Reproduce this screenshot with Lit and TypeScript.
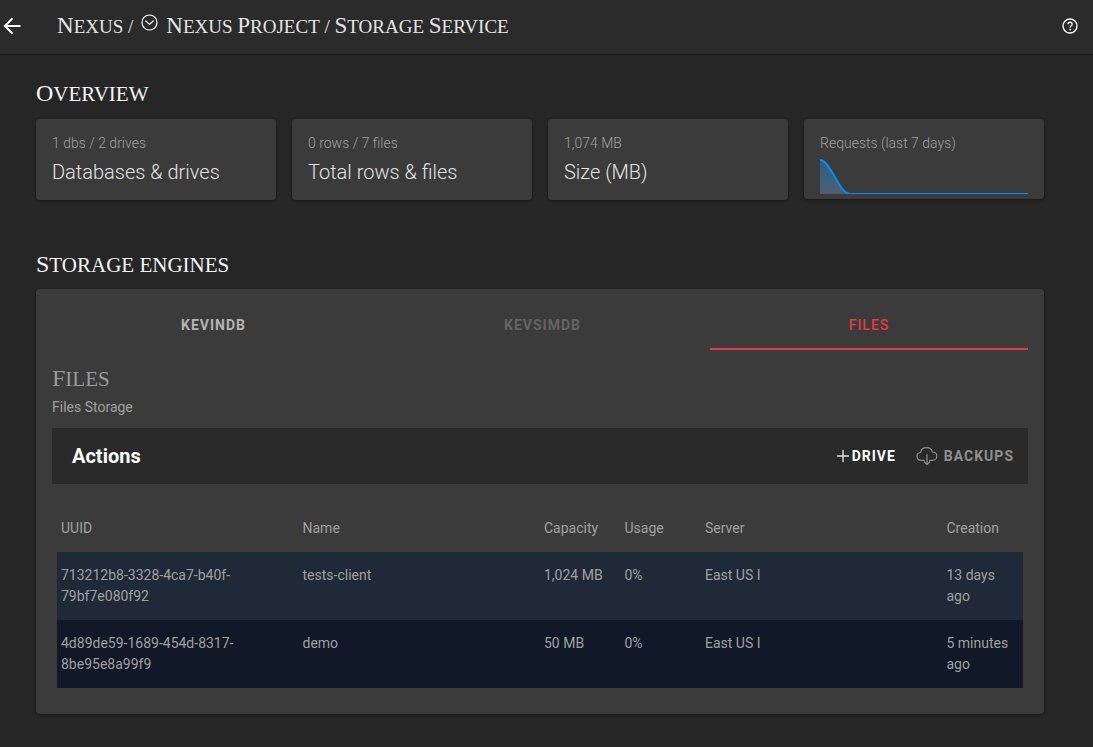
import { LitElement, html, css, svg } from "lit";
import { customElement, property, state } from "lit/decorators.js";
import { classMap } from "lit/directives/class-map.js";

interface Drive {
  uuid: string;
  name: string;
  capacity: string;
  usage: string;
  server: string;
  creation: string;
}

const drives: Drive[] = [
  {
    uuid: "713212b8-3328-4ca7-b40f-79bf7e080f92",
    name: "tests-client",
    capacity: "1,024 MB",
    usage: "0%",
    server: "East US I",
    creation: "13 days ago",
  },
  {
    uuid: "4d89de59-1689-454d-8317-8be95e8a99f9",
    name: "demo",
    capacity: "50 MB",
    usage: "0%",
    server: "East US I",
    creation: "5 minutes ago",
  },
];

/* Titling text: large initials on capitalised words, small capitals elsewhere. */
const titlingStyles = css`
  .word {
    display: inline-block;
    text-transform: uppercase;
  }
  .title .initial::first-letter {
    font-size: 24px;
  }
  .crumbs .initial::first-letter {
    font-size: 23px;
  }
`;

const titling = (text: string) =>
  text
    .split(" ")
    .map(
      (word, i) =>
        html`${i ? " " : ""}<span class=${classMap({ word: true, initial: /^[A-Z]/.test(word) })}>${word}</span>`
    );

const reset = css`
  *,
  *::before,
  *::after {
    box-sizing: border-box;
  }
  h1,
  h2,
  h3,
  p {
    margin: 0;
    font-weight: 400;
  }
  svg {
    display: block;
    flex: none;
  }
  a {
    color: inherit;
    text-decoration: none;
  }
  button {
    font: inherit;
    color: inherit;
    background: none;
    border: 0;
    padding: 0;
    cursor: pointer;
  }
`;

@customElement("app-header")
export class AppHeader extends LitElement {
  static styles = [
    reset,
    titlingStyles,
    css`
      :host {
        display: flex;
        align-items: center;
        box-sizing: border-box;
        height: 54px;
        padding: 0 15px 2px 0;
        background: #2b2b2b;
        box-shadow: 0 1px 1px #202020;
      }
      .crumbs {
        display: flex;
        align-items: center;
        gap: 8px;
        flex: 1;
        margin-left: 33px;
        font-family: "Liberation Serif", serif;
        font-size: 19px;
        line-height: 24px;
        color: #e4e4e4;
        white-space: nowrap;
      }
      .switch {
        margin-bottom: 7px;
      }
    `,
  ];

  render() {
    return html`
      <button aria-label="Back">
        <svg width="24" height="24" viewBox="0 0 24 24" fill="#fff">
          <path d="M20.5 10.9H7.4l5.8-5.8-1.5-1.4L3.4 12l8.3 8.3 1.5-1.4-5.8-5.8h13.1z" />
        </svg>
      </button>
      <nav class="crumbs" aria-label="Breadcrumb">
        <span><a href="#">${titling("Nexus")}</a> /</span>
        <button class="switch" aria-label="Switch project">
          <svg width="17" height="17" viewBox="0 0 17 17" fill="none" stroke="#fff" stroke-width="1.2">
            <circle cx="8.5" cy="8.5" r="7.5" />
            <path d="M4.8 7l3.7 3.4L12.2 7" stroke-linecap="round" stroke-linejoin="round" />
          </svg>
        </button>
        <span><a href="#">${titling("Nexus Project")}</a> / ${titling("Storage Service")}</span>
      </nav>
      <button aria-label="Help">
        <svg width="16" height="16" viewBox="0 0 16 16" fill="none" stroke="#fff" stroke-width="1.3">
          <circle cx="8" cy="8" r="7" />
          <path d="M5.9 6.3C5.9 3.5 10.2 3.6 10.2 6.2 10.2 7.7 8.1 7.8 8.1 9.6" />
          <path d="M8.1 10.8v1.4" stroke-width="1.5" />
        </svg>
      </button>
    `;
  }
}

@customElement("stat-card")
export class StatCard extends LitElement {
  @property() detail = "";
  @property() label = "";

  static styles = [
    reset,
    css`
      :host {
        display: block;
        padding: 14px 16px;
        border-radius: 4px;
        background: #3b3b3b;
        box-shadow: 0 1px 3px rgba(0, 0, 0, 0.4);
        font-family: "Roboto Light", Roboto, sans-serif;
      }
      .detail,
      .label {
        font-weight: 300;
      }
      .detail {
        font-size: 14px;
        line-height: 20px;
        color: #a0a0a0;
      }
      .label {
        margin-top: 5px;
        font-size: 20px;
        line-height: 28px;
        color: #e2e2e2;
      }
    `,
  ];

  render() {
    return html`
      <p class="detail">${this.detail}</p>
      ${this.label ? html`<h3 class="label">${this.label}</h3>` : ""}
      <slot></slot>
    `;
  }
}

@customElement("request-chart")
export class RequestChart extends LitElement {
  @property({ attribute: false }) values: number[] = [];

  static styles = [
    reset,
    css`
      :host {
        display: block;
        margin-top: 6px;
      }
      svg {
        width: 100%;
        height: 35px;
      }
    `,
  ];

  private curve() {
    const step = 208 / (this.values.length - 1);
    const top = Math.max(...this.values);
    const y = (v: number) => 35 - (v / top) * 34;
    return this.values.reduce((path, v, i) => {
      if (!i) return `M0 ${y(v)}`;
      const before = (i - 0.65) * step;
      const after = (i - 0.35) * step;
      return `${path}C${before} ${y(this.values[i - 1])} ${after} ${y(v)} ${i * step} ${y(v)}`;
    }, "");
  }

  render() {
    const curve = this.curve();
    return html`<svg viewBox="0 0 208 35" preserveAspectRatio="none" role="img" aria-label="Requests per day">
      ${svg`
        <defs>
          <linearGradient id="area" x1="0" y1="0" x2="0" y2="1">
            <stop offset="0" stop-color="#29608c" />
            <stop offset="1" stop-color="#4f5f6e" />
          </linearGradient>
        </defs>
        <path d="${curve}V35H0Z" fill="url(#area)" />
        <path d=${curve} fill="none" stroke="#008ffb" stroke-width="2" />
      `}
    </svg>`;
  }
}

@customElement("drive-table")
export class DriveTable extends LitElement {
  @property({ attribute: false }) rows: Drive[] = [];

  static styles = [
    reset,
    css`
      :host {
        display: block;
        padding: 21px 5px 10px;
      }
      table {
        width: 100%;
        table-layout: fixed;
        border-collapse: collapse;
        font-size: 14px;
        line-height: 21px;
        color: #a0a0a0;
      }
      .wide {
        width: 25%;
      }
      th,
      td {
        padding: 13px 4px;
        text-align: left;
        vertical-align: top;
        font-weight: 400;
      }
      tbody tr {
        background: #111827;
      }
      tbody tr:nth-child(odd) {
        background: #1f2937;
      }
    `,
  ];

  render() {
    return html`
      <table>
        <colgroup>
          <col class="wide" />
          <col class="wide" />
          <col />
          <col />
          <col class="wide" />
          <col />
        </colgroup>
        <thead>
          <tr>
            ${["UUID", "Name", "Capacity", "Usage", "Server", "Creation"].map(
              (name) => html`<th scope="col">${name}</th>`
            )}
          </tr>
        </thead>
        <tbody>
          ${this.rows.map(
            (d) => html`<tr>
              <td>${d.uuid}</td>
              <td>${d.name}</td>
              <td>${d.capacity}</td>
              <td>${d.usage}</td>
              <td>${d.server}</td>
              <td>${d.creation}</td>
            </tr>`
          )}
        </tbody>
      </table>
    `;
  }
}

@customElement("app-root")
export class AppRoot extends LitElement {
  @state() private active = "Files";

  static styles = [
    reset,
    titlingStyles,
    css`
      :host {
        display: block;
        min-height: 100vh;
        background: #262626;
        color: #e2e2e2;
        font-family: Roboto, sans-serif;
      }
      main {
        padding: 24px 49px 33px 36px;
      }
      .title {
        font-family: "Liberation Serif", serif;
        font-size: 21px;
        line-height: 30px;
        color: #f4f4f4;
      }
      .cards {
        display: grid;
        grid-template-columns: repeat(4, 1fr);
        align-items: start;
        gap: 16px;
        margin: 10px 0 49px;
      }
      .chart {
        padding-bottom: 5px;
      }
      .panel {
        margin-top: 9px;
        padding: 0 16px 16px;
        border-radius: 4px;
        background: #3b3b3b;
        box-shadow: 0 1px 3px rgba(0, 0, 0, 0.4);
      }
      .tabs {
        display: grid;
        grid-template-columns: 323fr 335fr 318fr;
        padding-top: 12px;
      }
      .tab {
        height: 49px;
        border-bottom: 2px solid transparent;
        font-size: 14px;
        font-weight: 700;
        letter-spacing: 1px;
        text-transform: uppercase;
        color: #b4b4b4;
      }
      .tab:disabled {
        color: #636363;
        cursor: default;
      }
      .tab.active {
        border-bottom-color: #e63946;
        color: #e63946;
        font-weight: 500;
      }
      .muted {
        margin-top: 13px;
        color: #9a9a9a;
      }
      .about {
        margin-top: 3px;
        font-size: 14px;
        line-height: 20px;
        color: #a0a0a0;
      }
      .actions {
        display: flex;
        align-items: center;
        gap: 20px;
        height: 56px;
        margin-top: 11px;
        padding: 0 14px 1px 20px;
        background: #2a2a2a;
      }
      .heading {
        flex: 1;
        font-size: 20px;
        font-weight: 700;
        line-height: 28px;
        color: #fff;
      }
      .action {
        display: flex;
        align-items: center;
        gap: 2px;
        font-size: 14px;
        font-weight: 700;
        line-height: 20px;
        letter-spacing: 1px;
        text-transform: uppercase;
        color: #fff;
      }
      .action:disabled {
        gap: 6px;
        color: #8f8f8f;
        cursor: default;
      }
    `,
  ];

  private tab(name: string, disabled = false) {
    const active = this.active === name;
    return html`<button
      class=${classMap({ tab: true, active })}
      role="tab"
      aria-selected=${active}
      ?disabled=${disabled}
      @click=${() => (this.active = name)}
    >
      ${name}
    </button>`;
  }

  render() {
    return html`
      <app-header></app-header>
      <main>
        <h2 class="title">${titling("Overview")}</h2>
        <section class="cards">
          <stat-card detail="1 dbs / 2 drives" label="Databases &amp; drives"></stat-card>
          <stat-card detail="0 rows / 7 files" label="Total rows &amp; files"></stat-card>
          <stat-card detail="1,074 MB" label="Size (MB)"></stat-card>
          <stat-card class="chart" detail="Requests (last 7 days)">
            <request-chart .values=${[7, 0, 0, 0, 0, 0, 0, 0]}></request-chart>
          </stat-card>
        </section>
        <h2 class="title">${titling("Storage engines")}</h2>
        <section class="panel">
          <div class="tabs" role="tablist">
            ${this.tab("KevinDB")} ${this.tab("KevsimDB", true)} ${this.tab("Files")}
          </div>
          <h3 class="title muted">${titling("Files")}</h3>
          <p class="about">Files Storage</p>
          <div class="actions">
            <h3 class="heading">Actions</h3>
            <button class="action">
              <svg width="14" height="14" viewBox="0 0 14 14" stroke="#e0e0e0" stroke-width="1.4" stroke-linecap="round">
                <path d="M7 1.5v11M1.5 7h11" />
              </svg>
              Drive
            </button>
            <button class="action" disabled>
              <svg width="22" height="20" viewBox="0 0 22 20" fill="none" stroke="#8f8f8f" stroke-width="1.2" stroke-linecap="round" stroke-linejoin="round">
                <path d="M8.3 14.4H5.4C2.8 14.4 1 12.6 1 10.3 1 8.2 2.5 6.7 4.6 6.5 5 3.7 7.5 1.6 10.6 1.6c2.9 0 5.2 1.8 5.8 4.4 2.5.1 4.4 1.9 4.4 4.2s-1.8 4.2-4.3 4.2h-2.8" />
                <path d="M11 8.5v9.9M8.4 16l2.6 2.5 2.6-2.5" />
              </svg>
              Backups
            </button>
          </div>
          <drive-table .rows=${drives}></drive-table>
        </section>
      </main>
    `;
  }
}
